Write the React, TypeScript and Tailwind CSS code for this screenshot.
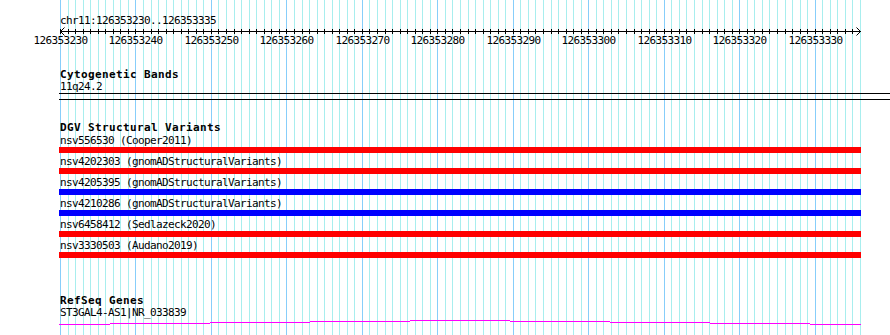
import React from "react";

const START = 126353230;
const N = 106;
const X0 = 60;
const PXW = 800 / N;
const xs = Array.from({ length: N + 1 }, (_, i) => Math.round(X0 + i * PXW) + 0.5);

const small = "font-['DejaVu_Sans_Mono',monospace] text-[11px] leading-[12px] tracking-[-0.62px] text-black whitespace-pre";
const bold = "font-['DejaVu_Sans_Mono',monospace] font-bold text-[11px] leading-[13px] tracking-[0.38px] text-black whitespace-pre";
const boldTight = "font-['DejaVu_Sans_Mono',monospace] font-bold text-[11px] leading-[12px] tracking-[0.38px] text-black whitespace-pre";

const variants: { label: string; color: string }[] = [
  { label: "nsv556530 (Cooper2011)", color: "bg-[#ff0000]" },
  { label: "nsv4202303 (gnomADStructuralVariants)", color: "bg-[#ff0000]" },
  { label: "nsv4205395 (gnomADStructuralVariants)", color: "bg-[#0000ff]" },
  { label: "nsv4210286 (gnomADStructuralVariants)", color: "bg-[#0000ff]" },
  { label: "nsv6458412 (Sedlazeck2020)", color: "bg-[#ff0000]" },
  { label: "nsv3330503 (Audano2019)", color: "bg-[#ff0000]" },
];

function Grid() {
  return (
    <svg className="absolute left-0 top-0" width={890} height={335}>
      {xs.map((x, i) => (
        <line key={i} x1={x} x2={x} y1={0} y2={335} stroke={i % 10 === 0 ? "#87cefa" : "#a8eeee"} strokeWidth={1} />
      ))}
    </svg>
  );
}

function Ruler() {
  return (
    <svg width={890} height={20} className="block">
      <line x1={60} x2={861} y1={4.5} y2={4.5} stroke="#000" strokeWidth={1} />
      <polyline points="64.5,0.5 60.5,4.5 64.5,8.5" fill="none" stroke="#000" strokeWidth={1} />
      <polyline points="856.5,0.5 860.5,4.5 856.5,8.5" fill="none" stroke="#000" strokeWidth={1} />
      {xs.slice(0, N).map((x, i) => (
        <line key={i} x1={x} x2={x} y1={2} y2={7} stroke="#000" strokeWidth={1} />
      ))}
      {xs.map((x, i) =>
        i % 10 === 0 && i < N ? (
          <text
            key={"t" + i}
            x={x}
            y={17}
            textAnchor="middle"
            fontFamily="DejaVu Sans Mono, monospace"
            fontSize={11}
            letterSpacing={-0.62}
            fill="#000"
          >
            {START + i}
          </text>
        ) : null
      )}
    </svg>
  );
}

function GeneLine() {
  const steps: [number, number, number][] = [
    [59, 110, 324],
    [110, 210, 323],
    [210, 310, 322],
    [310, 410, 321],
    [410, 510, 320],
    [510, 610, 321],
    [610, 710, 322],
    [710, 810, 323],
    [810, 861, 324],
  ];
  return (
    <svg width={890} height={10} className="block">
      {steps.map(([a, b, y], i) => (
        <line key={i} x1={a} x2={b} y1={y - 319 + 0.5} y2={y - 319 + 0.5} stroke="#ff00ff" strokeWidth={1} />
      ))}
    </svg>
  );
}

export default function App() {
  return (
    <div className="relative w-[890px] h-[335px] overflow-hidden bg-white">
      <Grid />
      <div className="relative flex flex-col">
        <div className={`${small} mt-[15px] pl-[60px]`}>chr11:126353230..126353335</div>
        <Ruler />
        <div className={`${bold} mt-[21px] pl-[60px]`}>Cytogenetic Bands</div>
        <div className={`${small} pl-[60px]`}>11q24.2</div>
        <div className="ml-[59px] h-[7px] w-[831px] border-y border-black" />
        <div className={`${bold} mt-[21px] pl-[60px]`}>DGV Structural Variants</div>
        <div className="mt-[1px] flex flex-col">
          {variants.map((v) => (
            <div key={v.label} className="flex flex-col mb-[3px]">
              <div className={`${small} pl-[60px]`}>{v.label}</div>
              <div className={`ml-[59px] h-[6px] w-[802px] ${v.color}`} />
            </div>
          ))}
        </div>
        <div className={`${boldTight} mt-[34px] pl-[60px]`}>RefSeq Genes</div>
        <div className={`${small} pl-[60px]`}>ST3GAL4-AS1|NR_033839</div>
        <GeneLine />
      </div>
    </div>
  );
}
